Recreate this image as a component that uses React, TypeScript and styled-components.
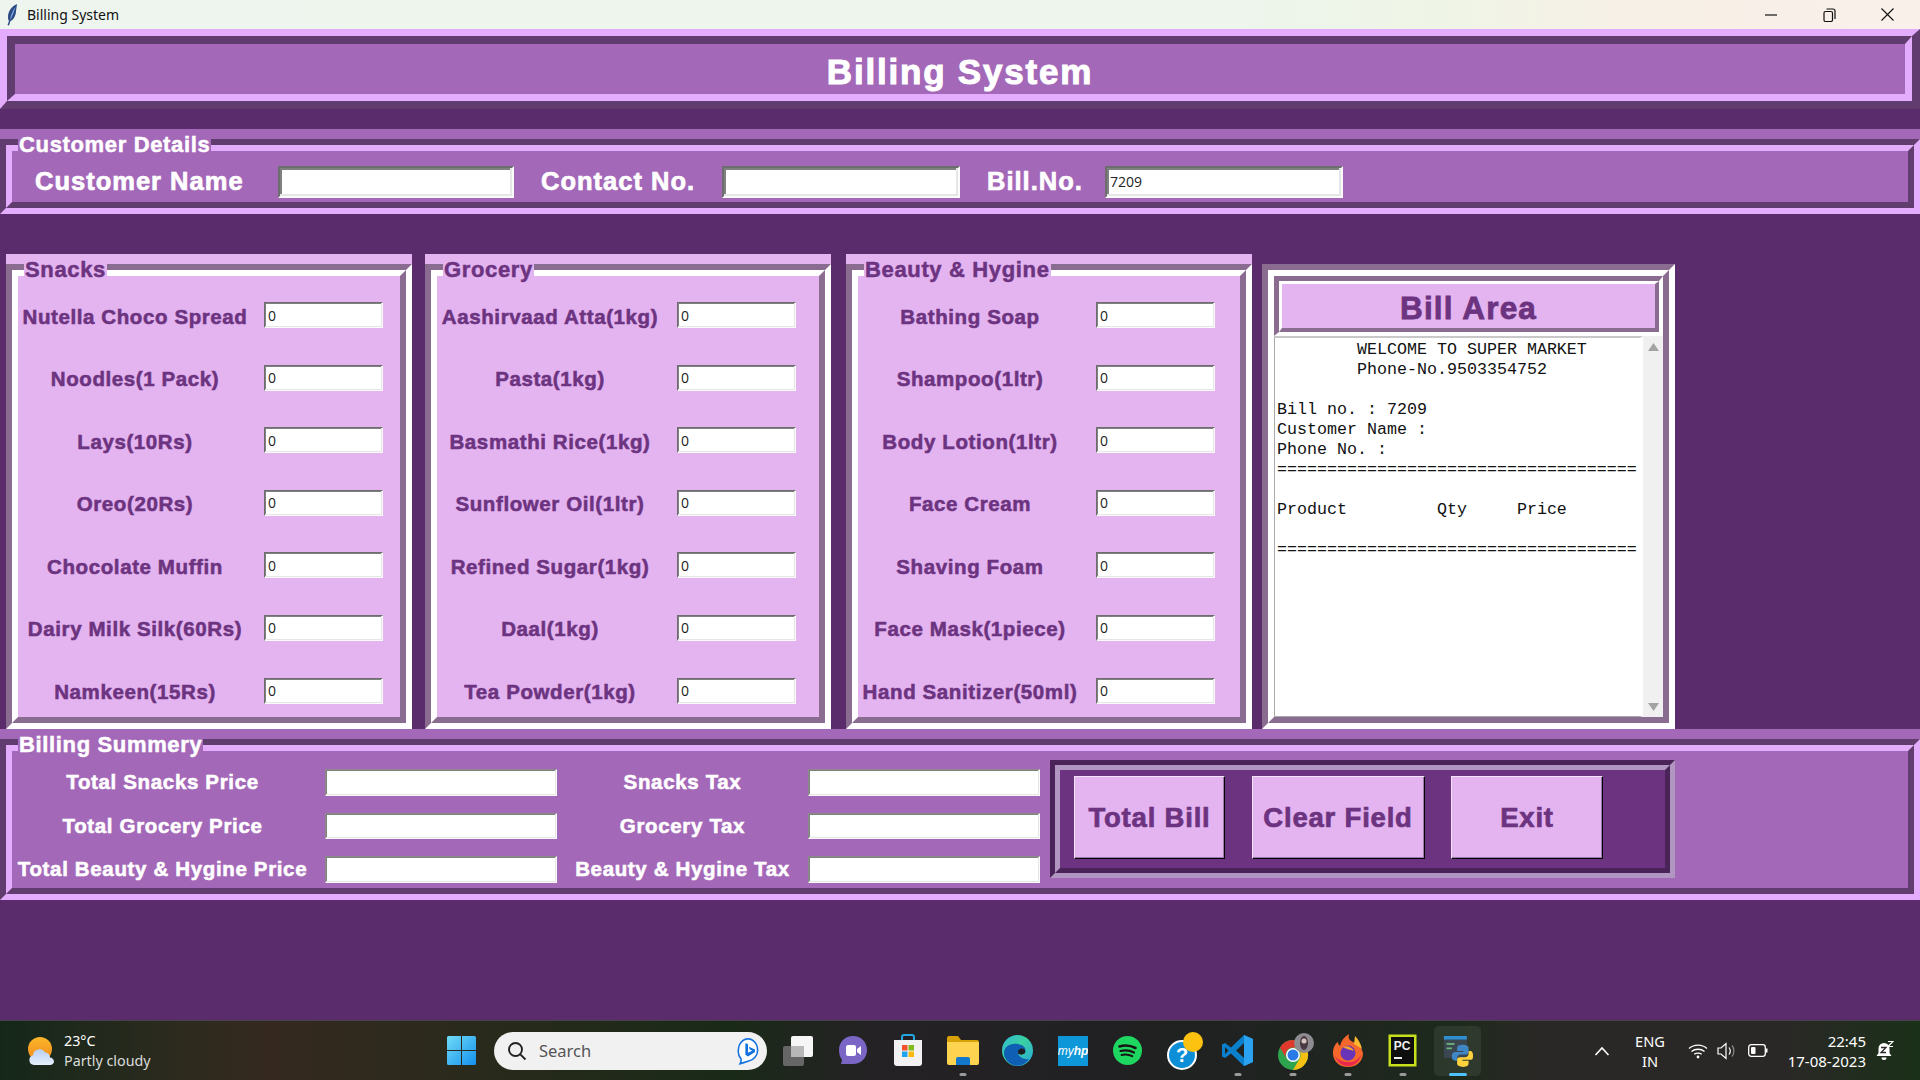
import React from "react";
import styled, { createGlobalStyle } from "styled-components";

const BG = "#5a2c6c";
const MID = "#a468b8";
const PALE = "#e4b4f0";
const LIGHT = "#e4acfc";
const DARK = "#613c6e";
const GRAY = "#8b6c91";
const INK = "#6c3380";

const Global = createGlobalStyle`
  html, body { margin: 0; padding: 0; background: ${BG}; }
  * { box-sizing: border-box; }
  #root { width: 1920px; height: 1080px; overflow: hidden; }
`;

const Page = styled.div`
  width: 1920px;
  height: 1080px;
  display: flex;
  flex-direction: column;
  background: ${BG};
  font-family: "Liberation Sans", Arial, sans-serif;
`;

const WindowBar = styled.div`
  height: 29px;
  flex: none;
  display: flex;
  align-items: center;
  padding: 0 4px 0 6px;
  background: linear-gradient(90deg, #edf5ee 0%, #edf5ec 65%, #eff5e6 75%, #f7f0e6 85%, #f9f0ea 100%);
  font-family: "Noto Sans", sans-serif;
  font-size: 14px;
  color: #111;
`;
const WindowTitle = styled.span`
  margin-left: 9px;
`;
const WindowButtons = styled.div`
  margin-left: auto;
  display: flex;
`;
const WindowButton = styled.div`
  width: 58px;
  height: 29px;
  display: flex;
  align-items: center;
  justify-content: center;
`;

const Bevel = styled.div<{ $tl: string; $br: string; $w: number; $bw?: number }>`
  border-style: solid;
  border-width: ${(p) => `${p.$w}px ${p.$bw ?? p.$w}px ${p.$bw ?? p.$w}px ${p.$w}px`};
  border-color: ${(p) => `${p.$tl} ${p.$br} ${p.$br} ${p.$tl}`};
  flex: 1;
  display: flex;
  min-width: 0;
`;

const TitleFrame = styled.header`
  height: 80px;
  flex: none;
  display: flex;
  margin-bottom: 20px;
`;
const TitleFill = styled.div`
  flex: 1;
  background: ${MID};
  display: flex;
  align-items: center;
  justify-content: center;
  padding-top: 5px;
`;
const TitleText = styled.h1`
  margin: 0;
  font-size: 35px;
  letter-spacing: 1.8px;
  font-weight: 700;
  color: #fff;
  line-height: 1;
  -webkit-text-stroke: 1px #fff;
`;

const GroupFrame = styled.section<{ $h: number; $mb?: number }>`
  position: relative;
  height: ${(p) => p.$h}px;
  flex: none;
  display: flex;
  padding-top: 10px;
  margin-bottom: ${(p) => p.$mb ?? 0}px;
  background: ${MID};
`;
const Legend = styled.span<{ $bg: string; $fg: string }>`
  position: absolute;
  left: 18px;
  top: 3px;
  padding: 0 1px;
  font-size: 22px;
  letter-spacing: 0.65px;
  line-height: 25px;
  font-weight: 700;
  background: ${(p) => p.$bg};
  color: ${(p) => p.$fg};
  white-space: nowrap;
  -webkit-text-stroke: 0.5px ${(p) => p.$fg};
`;

const CustomerRow = styled.div`
  flex: 1;
  background: ${MID};
  display: flex;
  align-items: center;
  padding-top: 10px;
`;
const CustomerLabel = styled.label<{ $w: number; $pad: number }>`
  width: ${(p) => p.$w}px;
  padding-left: ${(p) => p.$pad}px;
  font-size: 25.5px;
  letter-spacing: 1px;
  font-weight: 700;
  color: #fff;
  white-space: nowrap;
  -webkit-text-stroke: 0.7px #fff;
`;

const Field = styled.div<{ $w: number; $h: number; $i?: number; $edge?: string }>`
  width: ${(p) => p.$w}px;
  height: ${(p) => p.$h}px;
  flex: none;
  background: #fff;
  border: ${(p) => p.$i ?? 1}px solid;
  border-color: ${(p) => `${p.$edge ?? "#6d6d6d"} #fbfbfb #fbfbfb ${p.$edge ?? "#6d6d6d"}`};
  box-shadow: ${(p) => `inset -${p.$i ?? 1}px -${p.$i ?? 1}px 0 #e6e6e6, inset ${p.$i ?? 1}px ${p.$i ?? 1}px 0 #808080`};
  padding: 0 3px;
  display: flex;
  align-items: center;
  font-family: "Open Sans", sans-serif;
  font-size: 14px;
  color: #222;
`;

const Columns = styled.div`
  height: 475px;
  flex: none;
  display: flex;
  padding-left: 6px;
`;
const Panel = styled.section<{ $ml?: number }>`
  position: relative;
  width: 406px;
  flex: none;
  margin-left: ${(p) => p.$ml ?? 0}px;
  padding-top: 10px;
  display: flex;
  background: ${PALE};
`;
const PanelFill = styled.div<{ $label: number; $gap: number }>`
  flex: 1;
  background: ${PALE};
  padding-top: 26px;
  display: grid;
  grid-template-columns: ${(p) => p.$label}px 119px;
  column-gap: ${(p) => p.$gap}px;
  grid-auto-rows: 26px;
  row-gap: 36.6px;
  align-items: center;
`;
const ItemLabel = styled.label`
  padding-top: 3px;
  font-size: 20.5px;
  letter-spacing: 0.6px;
  font-weight: 700;
  color: ${INK};
  text-align: center;
  white-space: nowrap;
  -webkit-text-stroke: 0.55px ${INK};
`;

const BillPanel = styled.section`
  width: 413px;
  flex: none;
  margin: 10px 0 0 10px;
  display: flex;
`;
const BillStack = styled.div`
  flex: 1;
  min-width: 0;
  display: flex;
  flex-direction: column;
  background: #fff;
`;
const BillHead = styled.div`
  height: 60px;
  flex: none;
  display: flex;
`;
const BillHeadFill = styled.div`
  flex: 1;
  background: ${PALE};
  display: flex;
  align-items: center;
  justify-content: center;
  padding-top: 4px;
  font-size: 31.5px;
  letter-spacing: 1.15px;
  font-weight: 700;
  color: ${INK};
  -webkit-text-stroke: 0.8px ${INK};
`;
const BillBody = styled.div`
  flex: 1;
  display: flex;
  min-height: 0;
`;
const Receipt = styled.pre`
  flex: 1;
  margin: 0;
  padding: 2px 0 0 2px;
  background: #fff;
  border-top: 2px solid #c8c8c8;
  border-left: 1px solid #aaa;
  border-bottom: 1px solid #aaa;
  border-right: 3px solid #fff;
  font-family: "Liberation Mono", "Courier New", monospace;
  font-size: 16.67px;
  line-height: 20px;
  color: #111;
`;
const Scroll = styled.div`
  width: 20px;
  flex: none;
  background: #f0f0f0;
  display: flex;
  flex-direction: column;
  align-items: center;
  justify-content: space-between;
  padding: 7px 0 6px;
`;

const SummaryRow = styled.div`
  flex: 1;
  background: ${MID};
  display: flex;
  min-width: 0;
`;
const SummaryGrid = styled.div`
  display: grid;
  grid-template-columns: 313px 232px 251px 232px;
  grid-auto-rows: 26.6px;
  row-gap: 17px;
  padding-top: 18px;
  align-items: center;
`;
const SummaryLabel = styled.label<{ $pr?: number }>`
  padding: 0 ${(p) => p.$pr ?? 0}px 0 0;
  font-size: 20.5px;
  letter-spacing: 0.65px;
  font-weight: 700;
  color: #fff;
  text-align: center;
  white-space: nowrap;
  -webkit-text-stroke: 0.55px #fff;
`;
const ButtonDock = styled.div`
  width: 625px;
  height: 118px;
  flex: none;
  margin: 9px 0 0 10px;
  display: flex;
`;
const ButtonFill = styled.div`
  flex: 1;
  background: ${INK};
  display: flex;
  gap: 26.5px;
  padding: 6px 0 0 14px;
`;
const ActionButton = styled.button<{ $w: number }>`
  width: ${(p) => p.$w}px;
  height: 83px;
  flex: none;
  padding: 0;
  background: ${PALE};
  border: 1px solid;
  border-color: #f4e2fa #000 #000 #f4e2fa;
  box-shadow: inset -1px -1px 0 #9a7aa6;
  font-family: inherit;
  font-size: 27.5px;
  letter-spacing: 0.8px;
  font-weight: 700;
  color: ${INK};
  -webkit-text-stroke: 0.7px ${INK};
`;

const Spacer = styled.div`
  flex: 1;
`;

const Taskbar = styled.footer`
  height: 60px;
  flex: none;
  display: flex;
  align-items: center;
  border-top: 1px solid #46424a;
  background: linear-gradient(90deg, #14281a 0%, #2c2a1e 9%, #35291f 14%, #2a2a1c 24%, #1a2a18 38%, #242224 45%, #212022 58%, #1f2420 68%, #1e2a1c 76%, #2a2826 80%, #2a2826 93%, #1a3018 100%);
  font-family: "Noto Sans", sans-serif;
  color: #fff;
`;
const Weather = styled.div`
  width: 447px;
  flex: none;
  display: flex;
  align-items: center;
  gap: 9px;
  padding-left: 27px;
`;
const TwoLines = styled.div<{ $align?: string; $w?: number; $ml?: number; $size?: number }>`
  display: flex;
  flex-direction: column;
  align-items: ${(p) => p.$align ?? "flex-start"};
  width: ${(p) => (p.$w ? `${p.$w}px` : "auto")};
  margin-left: ${(p) => p.$ml ?? 0}px;
  font-size: ${(p) => p.$size ?? 14.3}px;
  line-height: 20px;
  white-space: nowrap;
`;
const Dim = styled.span`
  color: #dcdcdc;
`;
const Search = styled.div`
  width: 273px;
  height: 38px;
  flex: none;
  margin: 0 3px 0 18px;
  border-radius: 19px;
  background: #f1f1f1;
  display: flex;
  align-items: center;
  padding: 0 7px 0 13px;
  gap: 12px;
  color: #555;
  font-size: 16.5px;
`;
const SearchEnd = styled.span`
  margin-left: auto;
  display: flex;
`;
const Slot = styled.div<{ $active?: boolean }>`
  position: relative;
  width: 47px;
  height: 50px;
  flex: none;
  margin: 0 4px;
  display: flex;
  align-items: center;
  justify-content: center;
  border-radius: 5px;
  background: ${(p) => (p.$active ? "rgba(255,255,255,0.07)" : "transparent")};
`;
const Dot = styled.span<{ $active?: boolean }>`
  position: absolute;
  bottom: 0;
  left: 50%;
  transform: translateX(-50%);
  width: ${(p) => (p.$active ? "18px" : "7px")};
  height: 3px;
  border-radius: 2px;
  background: ${(p) => (p.$active ? "#4cc2ff" : "#9a9a9a")};
`;
const Tray = styled.div`
  margin-left: auto;
  padding-right: 26px;
  display: flex;
  align-items: center;
`;
const TrayIcon = styled.span<{ $ml: number }>`
  margin-left: ${(p) => p.$ml}px;
  display: flex;
`;

const Feather = () => (
  <svg width="12" height="22" viewBox="0 0 12 22">
    <path d="M11 0C6 2 2 7 2 13c0 2 .4 3 1 4L1.5 21l1.5.5L4.500 17c3-1 5-5 5.500-9 .2-3 .8-6 1-8z" fill="#2c4a86" />
    <path d="M9.500 3C7 6 5 10 4 16c2-3 4-8 5.500-13z" fill="#7fb0e0" />
  </svg>
);
const WinMin = () => (
  <svg width="12" height="12" viewBox="0 0 12 12"><path d="M0 6h12" stroke="#111" strokeWidth="1.2" /></svg>
);
const WinRestore = () => (
  <svg width="13" height="14" viewBox="0 0 13 14" fill="none" stroke="#111" strokeWidth="1.2">
    <rect x="1" y="3.500" width="8.500" height="10" rx="1.500" />
    <path d="M3.500 1h6.500a2 2 0 0 1 2 2v8" />
  </svg>
);
const WinClose = () => (
  <svg width="13" height="13" viewBox="0 0 13 13"><path d="M.5.500l12 12M12.500.500l-12 12" stroke="#111" strokeWidth="1.1" /></svg>
);
const ArrowUp = () => (
  <svg width="11" height="8" viewBox="0 0 11 8"><path d="M5.500 0L11 8H0z" fill="#a3a3a3" /></svg>
);
const ArrowDown = () => (
  <svg width="11" height="8" viewBox="0 0 11 8"><path d="M0 0h11L5.500 8z" fill="#a3a3a3" /></svg>
);
const WeatherIcon = () => (
  <svg width="28" height="28" viewBox="0 0 28 28">
    <defs>
      <linearGradient id="sun" x1="0" y1="0" x2="0" y2="1"><stop offset="0" stopColor="#fbb62a" /><stop offset="1" stopColor="#f08a1c" /></linearGradient>
      <linearGradient id="cl" x1="0" y1="0" x2="0" y2="1"><stop offset="0" stopColor="#b8d0f4" /><stop offset="1" stopColor="#e6effc" /></linearGradient>
    </defs>
    <circle cx="13" cy="12" r="12" fill="url(#sun)" />
    <path d="M7 28a5 5 0 0 1-1-9.800A6.500 6.500 0 0 1 18 15.500a5 5 0 0 1 5 5c2 0 4 2 4 4s-2 3.500-4 3.500z" fill="url(#cl)" />
  </svg>
);
const WinLogo = () => (
  <svg width="29" height="29" viewBox="0 0 29 29" style={{ flex: "none" }}>
    <defs>
      <linearGradient id="wl" x1="0" y1="0" x2="1" y2="1"><stop offset="0" stopColor="#6fdcf6" /><stop offset="1" stopColor="#1590ef" /></linearGradient>
    </defs>
    <path d="M0 1.500A1.500 1.500 0 0 1 1.500 0H14v14H0zM15 0h12.500A1.500 1.500 0 0 1 29 1.500V14H15zM0 15h14v14H1.500A1.500 1.500 0 0 1 0 27.500zM15 15h14v12.500a1.500 1.500 0 0 1-1.500 1.500H15z" fill="url(#wl)" />
  </svg>
);
const SearchGlass = () => (
  <svg width="20" height="20" viewBox="0 0 20 20" fill="none" stroke="#222" strokeWidth="1.900">
    <circle cx="8.500" cy="8.500" r="6.500" /><path d="M13.300 13.300L18.500 18.500" />
  </svg>
);
const Bing = () => (
  <svg width="24" height="28" viewBox="0 0 26 32">
    <path d="M13 2a11.500 12.500 0 0 1 11 13c0 6-4 11-10 12.500-3 1-7 2-10 3 1-2 1.500-3.500 1-5.500A13 13 0 0 1 2 15 11.500 12.500 0 0 1 13 2z" fill="#fff" stroke="#1273e0" strokeWidth="1.800" />
    <path d="M10 7l3 1v10l5-2.500-3-1.300-1-3 7 3v3l-8 5-3-2z" fill="#1273e0" />
  </svg>
);
const TaskView = () => (
  <svg width="32" height="32" viewBox="0 0 32 32">
    <rect x="1" y="11" width="21" height="20" rx="2" fill="#666" />
    <rect x="9" y="1" width="22" height="21" rx="2" fill="#f6f6f6" />
    <rect x="9" y="11" width="13" height="11" fill="#b8b8b8" />
  </svg>
);
const Chat = () => (
  <svg width="30" height="32" viewBox="0 0 30 32">
    <path d="M15 1c8 0 14 6 14 14s-6 14-14 14H3l1-4C2 22 1 19 1 15 1 7 7 1 15 1z" fill="#7b66c6" />
    <rect x="8" y="10" width="10" height="11" rx="2" fill="#fff" />
    <path d="M19 14l4-3v9l-4-3z" fill="#fff" />
  </svg>
);
const Store = () => (
  <svg width="30" height="33" viewBox="0 0 30 33">
    <path d="M9 7V3a2 2 0 0 1 2-2h8a2 2 0 0 1 2 2v4" fill="none" stroke="#22a7e0" strokeWidth="2" />
    <path d="M1 6h28v23a3 3 0 0 1-3 3H4a3 3 0 0 1-3-3z" fill="#f2f2f2" />
    <rect x="9" y="11" width="5.500" height="5.500" fill="#f0502c" /><rect x="15.500" y="11" width="5.500" height="5.500" fill="#7fba1a" />
    <rect x="9" y="17.500" width="5.500" height="5.500" fill="#1ea5ee" /><rect x="15.500" y="17.500" width="5.500" height="5.500" fill="#fdb90c" />
  </svg>
);
const Folder = () => (
  <svg width="32" height="29" viewBox="0 0 32 29">
    <path d="M0 2a2 2 0 0 1 2-2h9l3 4h16a2 2 0 0 1 2 2v4H0z" fill="#d8a108" />
    <path d="M0 6h32v21a2 2 0 0 1-2 2H2a2 2 0 0 1-2-2z" fill="#fdd34f" />
    <path d="M9 23a2 2 0 0 1 2-2h10a2 2 0 0 1 2 2v6H9z" fill="#1278cc" />
  </svg>
);
const Edge = () => (
  <svg width="31" height="31" viewBox="0 0 31 31">
    <defs>
      <linearGradient id="ed" x1="0" y1="0" x2="1" y2="1"><stop offset="0" stopColor="#2fb8d8" /><stop offset=".45" stopColor="#3ad0a0" /><stop offset="1" stopColor="#2aa8e0" /></linearGradient>
    </defs>
    <circle cx="15.500" cy="15.500" r="15.500" fill="url(#ed)" />
    <path d="M2 18C2 11 9 7.500 16 9c6 1 9 5 7 8.500-1.500 2-5 2-7.500 0 1.500 5 7 7.500 11.500 6.500-3 5-9 7.500-14.500 6.500C7 29 2 24 2 18z" fill="#0f5fb4" />
    <path d="M16 18.500c-.5-3 1.500-5.500 4.500-5 2.500.5 3.500 3 2 5-2 1.500-4.500 1.500-6.500 0z" fill="#1f1f22" />
  </svg>
);
const MyHp = () => (
  <svg width="30" height="30" viewBox="0 0 30 30">
    <rect width="30" height="30" fill="#0d96d8" />
    <text x="15" y="19" textAnchor="middle" fontFamily="Liberation Sans" fontStyle="italic" fontSize="12" fill="#fff">my<tspan fontWeight="700">hp</tspan></text>
  </svg>
);
const Spotify = () => (
  <svg width="29" height="29" viewBox="0 0 29 29">
    <circle cx="14.500" cy="14.500" r="14.500" fill="#1ed760" />
    <g fill="none" stroke="#191414" strokeLinecap="round">
      <path d="M6.500 10.500c5-1.500 11-1 16 1.500" strokeWidth="2.600" />
      <path d="M7.500 15c4.500-1.200 9.500-.7 13.500 1.500" strokeWidth="2.200" />
      <path d="M8.500 19c3.500-.9 7.500-.5 10.800 1.200" strokeWidth="1.900" />
    </g>
  </svg>
);
const Help = () => (
  <svg width="36" height="38" viewBox="-2 0 36 38" overflow="visible">
    <circle cx="15" cy="23" r="14" fill="#0d8fd8" stroke="#fff" strokeWidth="2" />
    <text x="15" y="30" textAnchor="middle" fontFamily="Liberation Sans" fontWeight="700" fontSize="20" fill="#fff">?</text>
    <circle cx="26" cy="10" r="10" fill="#fdc20f" />
  </svg>
);
const VSCode = () => (
  <svg width="31" height="31" viewBox="0 0 31 31">
    <path d="M22 0l9 4v23l-9 4L9 18.500 3 23l-3-1.500V9.500L3 8l6 4.500z" fill="#0a7fcc" />
    <path d="M22 0l9 4v23l-9 4z" fill="#2ba2ef" />
    <path d="M22 8l-8 7.500 8 7.500z" fill="#1f2420" />
    <path d="M3 12v7l3.500-3.500z" fill="#1f2420" />
  </svg>
);
const Chrome = () => (
  <svg width="38" height="38" viewBox="-4 0 38 38" overflow="visible">
    <circle cx="15" cy="23" r="15" fill="#2ea44f" />
    <path d="M15 8a15 15 0 0 1 13 7.500H15a7.500 7.500 0 0 0-6.500 11.250L2 15.500A15 15 0 0 1 15 8z" fill="#e0382c" />
    <path d="M28 15.500a15 15 0 0 1-13 22.500l6.500-11.250A7.500 7.500 0 0 0 15 15.500z" fill="#f6c013" />
    <circle cx="15" cy="23" r="7" fill="#fff" /><circle cx="15" cy="23" r="5.500" fill="#2a7be8" />
    <circle cx="26" cy="11" r="10" fill="#8d8b8f" />
    <ellipse cx="26" cy="11" rx="4" ry="7" fill="#4a3a44" />
    <circle cx="26" cy="9" r="2.500" fill="#d9c5c0" />
  </svg>
);
const Firefox = () => (
  <svg width="30" height="33" viewBox="0 0 30 33">
    <path d="M15 33C6 33 0 27 0 19 0 14 2 10 5 8c0 2 1 3 2 4 1-5 4-9 9-12-1 4 0 6 4 8 5 2 9 6 10 11 0 8-6 14-15 14z" fill="#f5672a" />
    <path d="M22 2c3 3 6 8 7 13l-8-5z" fill="#fcb72f" />
    <path d="M2 22c2 6 7 10 13 10 7 0 12-5 13-11-3 5-8 8-13 7-5 0-10-2-13-6z" fill="#e8284f" />
    <circle cx="15" cy="19" r="7.500" fill="#6a34b8" />
    <path d="M10 13c4-2 9 0 11 4-4-2-7-1-11-4z" fill="#f7a32c" />
  </svg>
);
const PyCharm = () => (
  <svg width="29" height="33" viewBox="0 0 29 33">
    <rect x="0.500" y="0.500" width="28" height="32" fill="#c8e01c" />
    <rect x="3" y="3" width="23" height="27" fill="#0e0e0e" />
    <text x="14" y="16" textAnchor="middle" fontFamily="Liberation Sans" fontWeight="700" fontSize="12" fill="#eee">PC</text>
    <rect x="6" y="23" width="8" height="2" fill="#eee" />
  </svg>
);
const PythonApp = () => (
  <svg width="30" height="32" viewBox="0 0 34 36">
    <rect x="1" y="1" width="26" height="25" rx="1" fill="#3a4650" />
    <rect x="1" y="1" width="26" height="4" fill="#2e8fd0" />
    <rect x="4" y="9" width="9" height="2" fill="#6fb57a" /><rect x="4" y="14" width="6" height="2" fill="#6fb57a" />
    <path d="M22 11c-4 0-6 1-6 4v3h7v1h-9c-3 0-4 2-4 5s1 5 4 5h2v-3c0-2 2-4 4-4h6c2 0 3-1 3-3v-4c0-3-3-4-7-4z" fill="#3f86c4" />
    <path d="M23 36c4 0 6-1 6-4v-3h-7v-1h9c3 0 3-2 3-5s-1-5-3-5h-2v3c0 2-2 4-4 4h-6c-2 0-3 1-3 3v4c0 3 3 4 7 4z" fill="#fdd23c" />
  </svg>
);
const Chevron = () => (
  <svg width="16" height="10" viewBox="0 0 16 10" fill="none" stroke="#fff" strokeWidth="1.600"><path d="M1.500 9L8 2l6.500 7" /></svg>
);
const Wifi = () => (
  <svg width="20" height="16" viewBox="0 0 20 16" fill="none" stroke="#fff" strokeWidth="1.300">
    <path d="M1 5.500c5-4.500 13-4.500 18 0M3.500 8.500c3.500-3 9.500-3 13 0M6.300 11.300c2-1.700 5.400-1.700 7.400 0" />
    <circle cx="10" cy="14" r="1.400" fill="#fff" stroke="none" />
  </svg>
);
const Speaker = () => (
  <svg width="20" height="18" viewBox="0 0 20 18" fill="none" stroke="#fff" strokeWidth="1.200">
    <path d="M1 6h3l5-4.500v15L4 12H1z" />
    <path d="M12 5.500c1.500 2 1.500 5 0 7" />
    <path d="M15 3.500c2.500 3 2.500 8 0 11" stroke="#8a8a8a" />
  </svg>
);
const Battery = () => (
  <svg width="20" height="13" viewBox="0 0 20 13" fill="none">
    <rect x="0.700" y="0.700" width="16.600" height="11.600" rx="2.500" stroke="#fff" strokeWidth="1.300" />
    <rect x="3" y="3" width="4.500" height="7" rx="1" fill="#fff" />
    <rect x="18" y="4.500" width="1.500" height="4" fill="#fff" />
  </svg>
);
const Bell = () => (
  <svg width="18" height="20" viewBox="0 0 18 20">
    <path d="M8 2a5.500 5.500 0 0 1 5.500 5.500V12l2 3H.500l2-3V7.500A5.500 5.500 0 0 1 8 2z" fill="#fff" />
    <path d="M5.500 16.500h5a2.500 2.500 0 0 1-5 0z" fill="#fff" />
    <path d="M5 6.500h5l-5 5h5" fill="none" stroke="#2a2826" strokeWidth="1.300" />
    <path d="M12 .5h5l-5 5h5" fill="none" stroke="#fff" strokeWidth="1.200" />
  </svg>
);

const snacks = ["Nutella Choco Spread", "Noodles(1 Pack)", "Lays(10Rs)", "Oreo(20Rs)", "Chocolate Muffin", "Dairy Milk Silk(60Rs)", "Namkeen(15Rs)"];
const grocery = ["Aashirvaad Atta(1kg)", "Pasta(1kg)", "Basmathi Rice(1kg)", "Sunflower Oil(1ltr)", "Refined Sugar(1kg)", "Daal(1kg)", "Tea Powder(1kg)"];
const beauty = ["Bathing Soap", "Shampoo(1ltr)", "Body Lotion(1ltr)", "Face Cream", "Shaving Foam", "Face Mask(1piece)", "Hand Sanitizer(50ml)"];

const receipt = `        WELCOME TO SUPER MARKET
        Phone-No.9503354752

Bill no. : 7209
Customer Name : 
Phone No. : 
====================================

Product         Qty     Price

====================================`;

const summary = [
  ["Total Snacks Price", "Snacks Tax"],
  ["Total Grocery Price", "Grocery Tax"],
  ["Total Beauty & Hygine Price", "Beauty & Hygine Tax"],
];

const ItemPanel = ({ title, items, label, gap, ml }: { title: string; items: string[]; label: number; gap: number; ml?: number }) => (
  <Panel $ml={ml}>
    <Bevel $tl={GRAY} $br="#fff" $w={6}>
      <Bevel $tl="#fff" $br={GRAY} $w={6}>
        <PanelFill $label={label} $gap={gap}>
          {items.map((it) => (
            <React.Fragment key={it}>
              <ItemLabel>{it}</ItemLabel>
              <Field $w={119} $h={26}>0</Field>
            </React.Fragment>
          ))}
        </PanelFill>
      </Bevel>
    </Bevel>
    <Legend $bg={PALE} $fg={INK}>{title}</Legend>
  </Panel>
);

const slots: { icon: React.ReactNode; dot?: boolean; active?: boolean }[] = [
  { icon: <TaskView /> },
  { icon: <Chat /> },
  { icon: <Store /> },
  { icon: <Folder />, dot: true },
  { icon: <Edge /> },
  { icon: <MyHp /> },
  { icon: <Spotify /> },
  { icon: <Help /> },
  { icon: <VSCode />, dot: true },
  { icon: <Chrome />, dot: true },
  { icon: <Firefox />, dot: true },
  { icon: <PyCharm />, dot: true },
  { icon: <PythonApp />, active: true },
];

export default function App() {
  return (
    <Page>
      <Global />
      <WindowBar>
        <Feather />
        <WindowTitle>Billing System</WindowTitle>
        <WindowButtons>
          <WindowButton><WinMin /></WindowButton>
          <WindowButton><WinRestore /></WindowButton>
          <WindowButton><WinClose /></WindowButton>
        </WindowButtons>
      </WindowBar>

      <TitleFrame>
        <Bevel $tl={LIGHT} $br={DARK} $w={7} $bw={8}>
          <Bevel $tl={DARK} $br={LIGHT} $w={8} $bw={7}>
            <TitleFill><TitleText>Billing System</TitleText></TitleFill>
          </Bevel>
        </Bevel>
      </TitleFrame>

      <GroupFrame $h={85} $mb={40}>
        <Bevel $tl={DARK} $br={LIGHT} $w={6}>
          <Bevel $tl={LIGHT} $br={DARK} $w={6}>
            <CustomerRow>
              <CustomerLabel $w={266} $pad={23}>Customer Name</CustomerLabel>
              <Field $w={236} $h={32} $i={2} />
              <CustomerLabel $w={208} $pad={27}>Contact No.</CustomerLabel>
              <Field $w={238} $h={32} $i={2} />
              <CustomerLabel $w={145} $pad={27}>Bill.No.</CustomerLabel>
              <Field $w={238} $h={32} $i={2}>7209</Field>
            </CustomerRow>
          </Bevel>
        </Bevel>
        <Legend $bg={MID} $fg="#fff">Customer Details</Legend>
      </GroupFrame>

      <Columns>
        <ItemPanel title="Snacks" items={snacks} label={234} gap={12} />
        <ItemPanel title="Grocery" items={grocery} label={226} gap={14} ml={13} />
        <ItemPanel title="Beauty & Hygine" items={beauty} label={224} gap={14} ml={15} />
        <BillPanel>
          <Bevel $tl={GRAY} $br="#fff" $w={6}>
            <Bevel $tl="#fff" $br={GRAY} $w={6}>
              <BillStack>
                <BillHead>
                  <Bevel $tl={GRAY} $br="#fff" $w={5} $bw={4}>
                    <Bevel $tl="#fff" $br={GRAY} $w={3} $bw={4}>
                      <BillHeadFill>Bill Area</BillHeadFill>
                    </Bevel>
                  </Bevel>
                </BillHead>
                <BillBody>
                  <Receipt>{receipt}</Receipt>
                  <Scroll><ArrowUp /><ArrowDown /></Scroll>
                </BillBody>
              </BillStack>
            </Bevel>
          </Bevel>
        </BillPanel>
      </Columns>

      <GroupFrame $h={171}>
        <Bevel $tl={DARK} $br={LIGHT} $w={6}>
          <Bevel $tl={LIGHT} $br={DARK} $w={6}>
            <SummaryRow>
              <SummaryGrid>
                {summary.map(([a, b]) => (
                  <React.Fragment key={a}>
                    <SummaryLabel $pr={12}>{a}</SummaryLabel>
                    <Field $w={232} $h={26.6} $edge="#8a8a8a" />
                    <SummaryLabel>{b}</SummaryLabel>
                    <Field $w={232} $h={26.6} $edge="#8a8a8a" />
                  </React.Fragment>
                ))}
              </SummaryGrid>
              <ButtonDock>
                <Bevel $tl="#4a2458" $br="#b096c0" $w={5}>
                  <Bevel $tl="#b096c0" $br="#4a2458" $w={5}>
                    <ButtonFill>
                      <ActionButton $w={151}>Total Bill</ActionButton>
                      <ActionButton $w={173}>Clear Field</ActionButton>
                      <ActionButton $w={152}>Exit</ActionButton>
                    </ButtonFill>
                  </Bevel>
                </Bevel>
              </ButtonDock>
            </SummaryRow>
          </Bevel>
        </Bevel>
        <Legend $bg={MID} $fg="#fff">Billing Summery</Legend>
      </GroupFrame>

      <Spacer />

      <Taskbar>
        <Weather>
          <WeatherIcon />
          <TwoLines>
            <span>23°C</span>
            <Dim>Partly cloudy</Dim>
          </TwoLines>
        </Weather>
        <WinLogo />
        <Search>
          <SearchGlass />
          <span>Search</span>
          <SearchEnd><Bing /></SearchEnd>
        </Search>
        {slots.map((s, i) => (
          <Slot key={i} $active={s.active}>
            {s.icon}
            {(s.dot || s.active) && <Dot $active={s.active} />}
          </Slot>
        ))}
        <Tray>
          <TrayIcon $ml={0}><Chevron /></TrayIcon>
          <TwoLines $align="center" $w={40} $ml={20} $size={14.6}>
            <span>ENG</span>
            <span>IN</span>
          </TwoLines>
          <TrayIcon $ml={18}><Wifi /></TrayIcon>
          <TrayIcon $ml={9}><Speaker /></TrayIcon>
          <TrayIcon $ml={11}><Battery /></TrayIcon>
          <TwoLines $align="flex-end" $w={90} $ml={8} $size={15}>
            <span>22:45</span>
            <span>17-08-2023</span>
          </TwoLines>
          <TrayIcon $ml={10}><Bell /></TrayIcon>
        </Tray>
      </Taskbar>
    </Page>
  );
}
